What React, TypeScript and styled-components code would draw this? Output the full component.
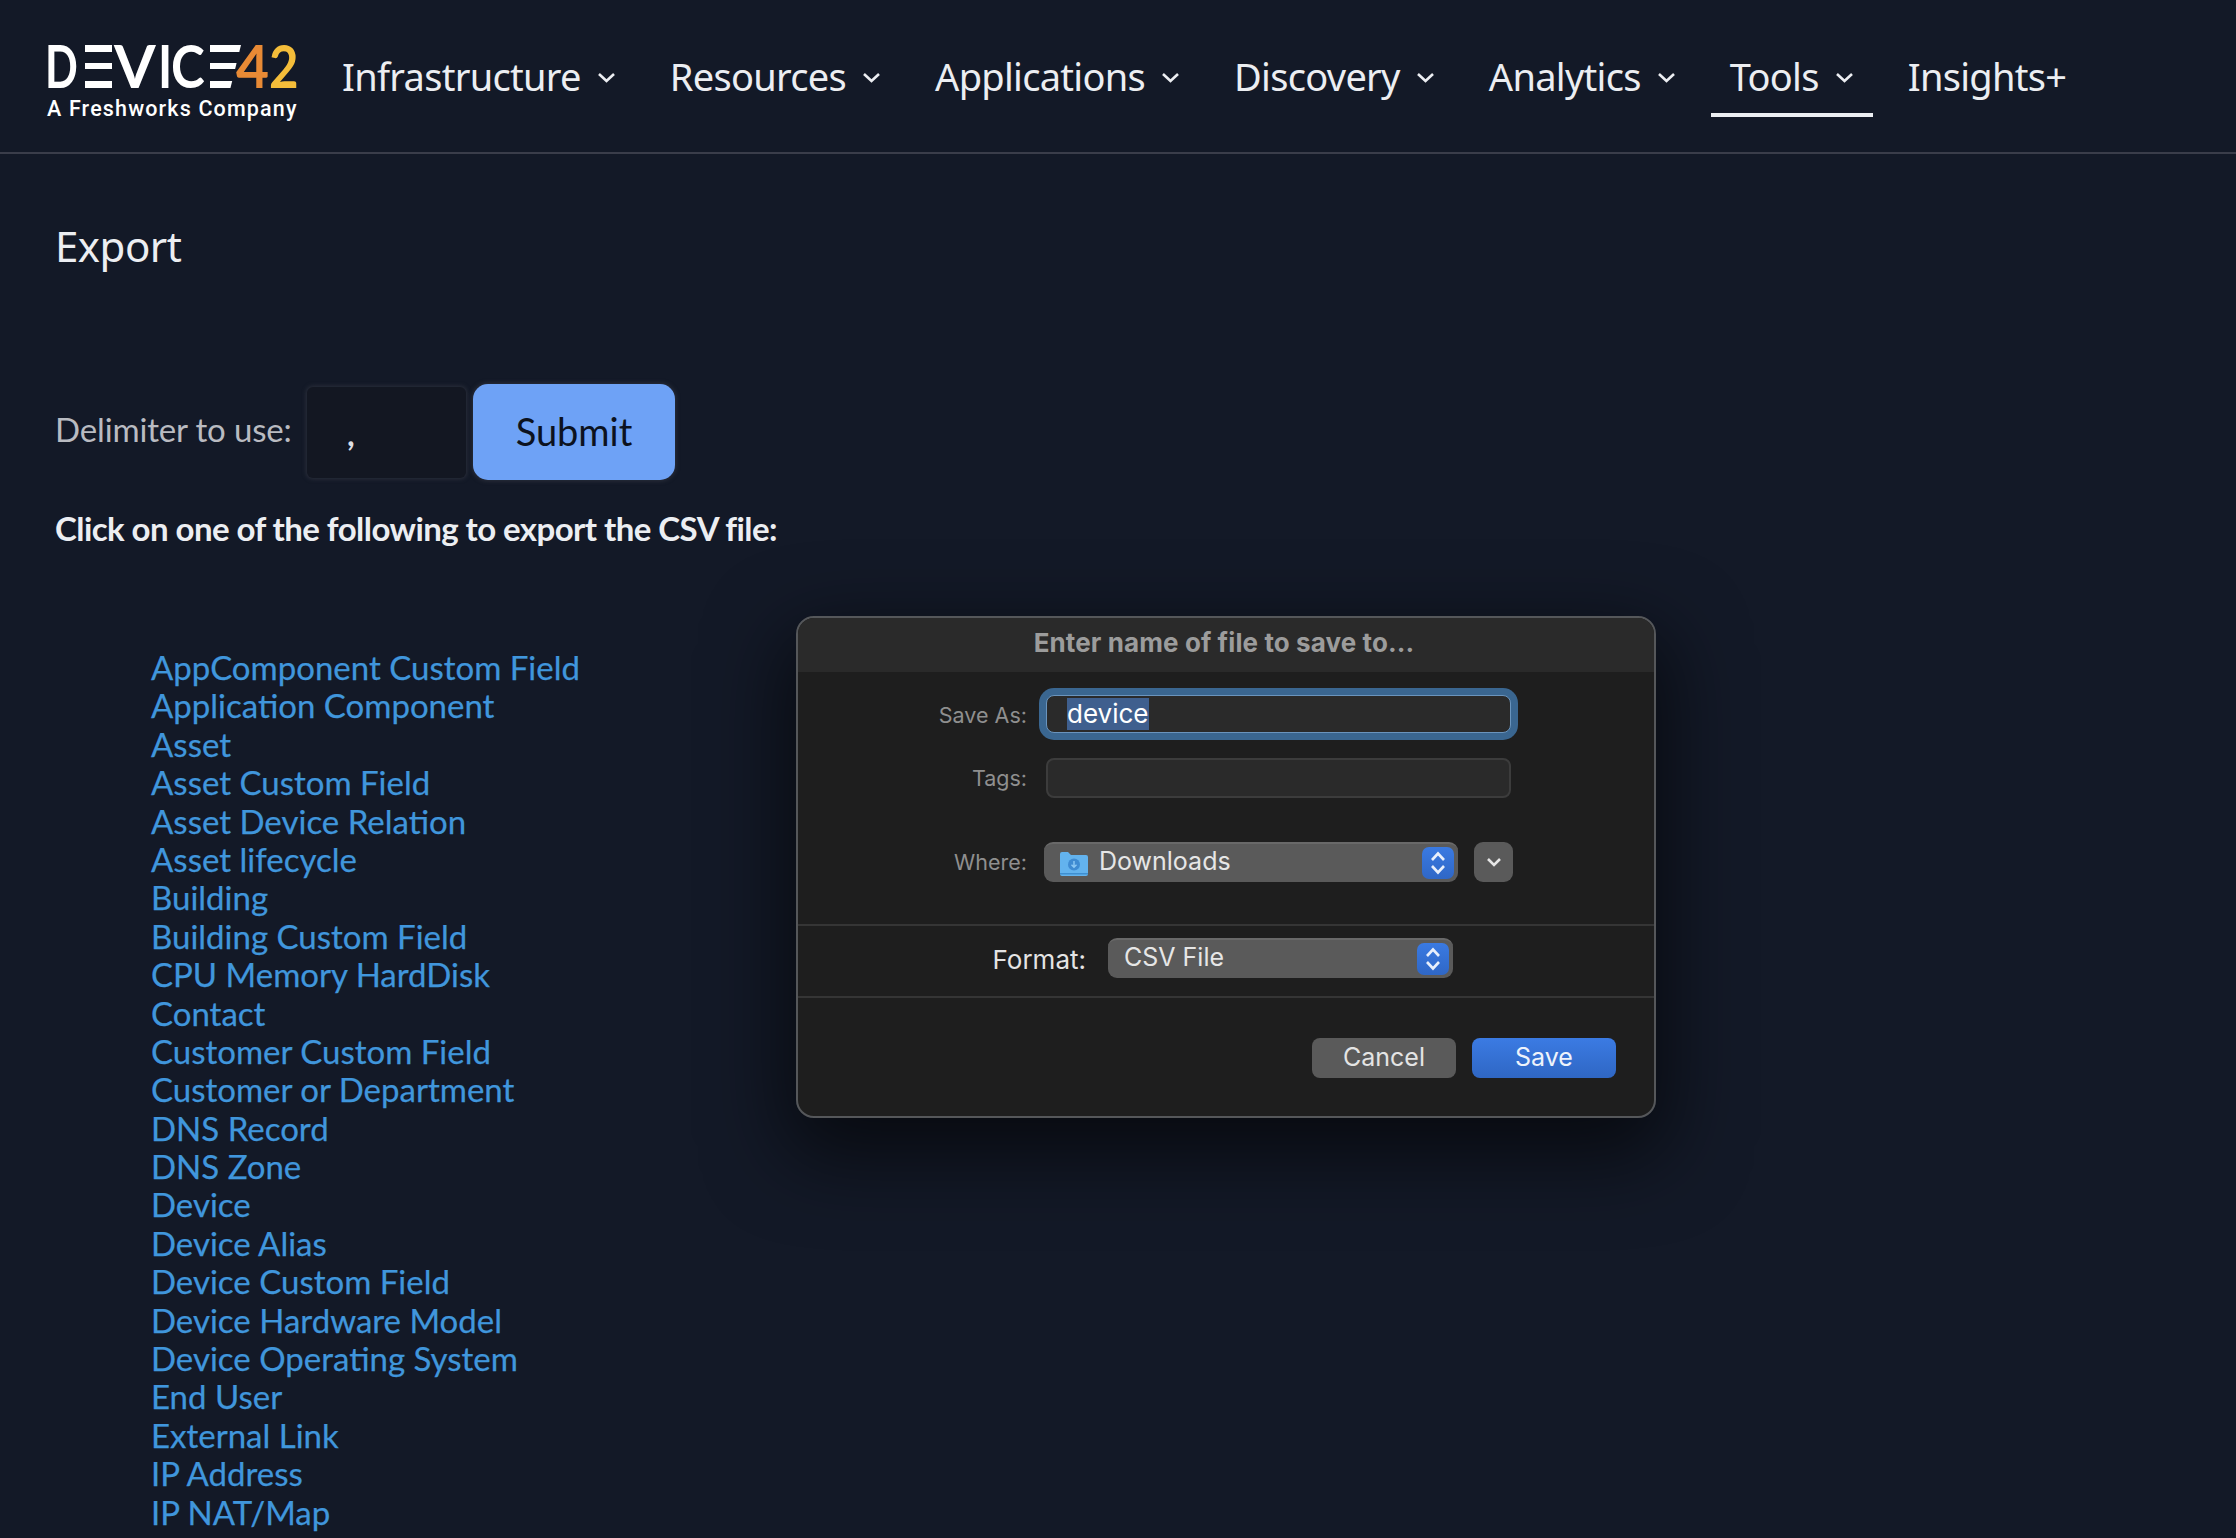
import React from 'react';
import styled, { createGlobalStyle } from 'styled-components';

const GlobalStyle = createGlobalStyle`
  html, body {
    margin: 0;
    padding: 0;
    background: #131927;
    overflow: hidden;
  }
  * { box-sizing: border-box; }
`;

const Page = styled.div`
  position: relative;
  width: 2236px;
  height: 1538px;
  overflow: hidden;
  background: #131927;
  color: #eceef2;
  font-family: 'Lato', 'Liberation Sans', sans-serif;
`;

const Header = styled.header`
  display: flex;
  align-items: flex-start;
  height: 154px;
  padding: 0 0 0 47px;
  border-bottom: 2px solid #3a3d4a;
`;

const Logo = styled.div`
  display: flex;
  flex-direction: column;
  width: 250px;
  padding-top: 45px;
  margin-right: 26px;
  flex-shrink: 0;
`;

const LogoWord = styled.div`
  display: flex;
  height: 43px;
  font-family: 'Lato', sans-serif;
  font-weight: 700;
  font-size: 60px;
  line-height: 40px;
  color: #fff;
`;

const LogoPart = styled.span<{ $w: number; $sx: number; $gap?: number }>`
  display: block;
  flex: 0 0 ${p => p.$w}px;
  width: ${p => p.$w}px;
  margin-left: ${p => p.$gap ?? 0}px;
  transform: scaleX(${p => p.$sx});
  transform-origin: left center;
  white-space: nowrap;
`;

const LogoFour = styled(LogoPart)`
  color: #e88a35;
`;

const LogoTwo = styled(LogoPart)`
  color: #f4bd3a;
`;

const LogoBars = styled.span<{ $w: number; $gap: number; $slant?: boolean }>`
  display: block;
  flex: 0 0 ${p => p.$w}px;
  height: 43px;
  margin-left: ${p => p.$gap}px;
  font-size: 20px;
  color: transparent;
  background:
    linear-gradient(#fff, #fff) 0 0 / 100% 7px no-repeat,
    linear-gradient(#fff, #fff) 0 18px / 100% 6px no-repeat,
    linear-gradient(#fff, #fff) 0 36px / 100% 7px no-repeat;
  ${p => p.$slant && 'clip-path: polygon(0 0, 100% 0, 66% 100%, 0 100%);'}
`;

const LogoTag = styled.div`
  margin-top: 8px;
  font-family: 'Roboto', sans-serif;
  font-size: 21.5px;
  font-weight: 500;
  letter-spacing: 1.15px;
  line-height: 26px;
  color: #fff;
  white-space: nowrap;
`;

const Nav = styled.nav`
  display: flex;
  gap: 16px;
  margin-top: 36px;
`;

const NavItem = styled.a<{ $active?: boolean }>`
  display: flex;
  align-items: flex-start;
  gap: 16px;
  height: 81px;
  padding: 0 19px;
  font-family: 'Noto Sans', sans-serif;
  font-size: 38px;
  line-height: 80px;
  letter-spacing: -0.7px;
  color: #eceef2;
  white-space: nowrap;
  border-bottom: 4px solid ${p => (p.$active ? '#eceef2' : 'transparent')};
`;

const Caret = styled.svg`
  width: 19px;
  height: 11px;
  margin-top: 36px;
  fill: none;
  stroke: #eceef2;
  stroke-width: 2.6;
`;

const Main = styled.main`
  padding: 0 0 0 55px;
`;

const Title = styled.h1`
  margin: 0;
  padding-top: 64px;
  height: 230px;
  font-family: 'Noto Sans', sans-serif;
  font-size: 42px;
  font-weight: 400;
  line-height: 56px;
  letter-spacing: -0.5px;
  color: #eceef2;
`;

const DelimiterRow = styled.form`
  display: flex;
  align-items: center;
  height: 96px;
`;

const DelimiterLabel = styled.label`
  width: 252px;
  margin-top: -7px;
  font-size: 33px;
  letter-spacing: -0.15px;
  color: #b9bbc1;
  white-space: nowrap;
`;

const DelimiterInput = styled.div`
  width: 159px;
  height: 91px;
  padding: 26px 0 0 40px;
  margin-right: 7px;
  border-radius: 6px;
  background: #131722;
  box-shadow: 0 0 4px 1px #2c303c;
  font-size: 33px;
  font-weight: 700;
  color: #dddfe4;
`;

const SubmitButton = styled.button`
  width: 202px;
  height: 96px;
  padding: 0 0 3px;
  border: none;
  border-radius: 15px;
  background: #6ea2f6;
  box-shadow: 0 0 4px 1px #2c303c;
  font-family: 'Lato', sans-serif;
  font-size: 38px;
  color: #0c1220;
`;

const Lead = styled.p`
  margin: 23px 0 0;
  font-size: 33px;
  font-weight: 700;
  letter-spacing: -0.56px;
  line-height: 50px;
  color: #eceef2;
  white-space: nowrap;
`;

const LinkList = styled.ul`
  display: flex;
  flex-direction: column;
  margin: 0;
  padding: 95px 0 0 96px;
  list-style: none;
`;

const LinkRow = styled.li`
  height: 38.4px;
  font-size: 33px;
  line-height: 38.4px;
  color: #4096dc;
  -webkit-text-stroke: 0.25px #4096dc;
  white-space: nowrap;
`;

const DialogShadow = styled.div`
  position: absolute;
  left: 796px;
  top: 616px;
  width: 860px;
  height: 502px;
  border-radius: 18px;
  box-shadow: 0 28px 80px 10px rgba(0, 0, 0, 0.6);
`;

const Dialog = styled.section`
  position: absolute;
  left: 796px;
  top: 616px;
  width: 860px;
  height: 502px;
  display: flex;
  flex-direction: column;
  background: #1e1e1e;
  border: 2px solid #55575a;
  border-radius: 18px;
  overflow: hidden;
  font-family: 'Inter', 'Liberation Sans', sans-serif;
`;

const DialogTitle = styled.h2`
  flex: 0 0 54px;
  margin: 0;
  padding-right: 4px;
  background: #2a2a2a;
  font-size: 26px;
  font-weight: 700;
  letter-spacing: 0.1px;
  line-height: 50px;
  text-align: center;
  color: #9c9c9c;
`;

const FormGrid = styled.div`
  display: grid;
  grid-template-columns: 229px 465px;
  column-gap: 19px;
  align-content: start;
  padding-top: 23px;
  height: 252px;
`;

const FieldLabel = styled.label<{ $rowGap: number }>`
  height: 40px;
  margin-bottom: ${p => p.$rowGap}px;
  font-size: 21.5px;
  line-height: 41px;
  text-align: right;
  color: #8f8f8f;
`;

const TextField = styled.div<{ $focus?: boolean; $rowGap: number }>`
  width: 465px;
  height: ${p => (p.$focus ? 38 : 40)}px;
  margin-bottom: ${p => p.$rowGap}px;
  padding-left: 20px;
  border-radius: 8px;
  background: #2a2a2a;
  border: ${p => (p.$focus ? '1px solid #6a94bd' : '2px solid #3c3c3c')};
  box-shadow: ${p => (p.$focus ? '0 0 0 7px #3a6690' : 'none')};
  font-size: 26px;
  line-height: 35px;
  color: #fff;
`;

const Selected = styled.span`
  display: inline-block;
  height: 32px;
  line-height: 31px;
  background: #3f5f8e;
`;

const WhereGroup = styled.div`
  display: flex;
  gap: 16px;
  width: 469px;
  margin-left: -2px;
`;

const Popup = styled.div<{ $w: number }>`
  display: flex;
  align-items: center;
  gap: 11px;
  width: ${p => p.$w}px;
  height: 40px;
  padding: 0 4px 0 16px;
  border-radius: 9px;
  background: #5a5a5a;
  border-top: 2px solid #696969;
  font-size: 25px;
  color: #e6e6e6;
`;

const PopupText = styled.span`
  flex: 1;
  margin-top: -5px;
`;

const Stepper = styled.span`
  display: flex;
  align-items: center;
  justify-content: center;
  width: 32px;
  height: 32px;
  border-radius: 7px;
  background: linear-gradient(#3a7ae2, #2f67c6);
`;

const SquareButton = styled.div`
  display: flex;
  align-items: center;
  justify-content: center;
  width: 39px;
  height: 40px;
  border-radius: 9px;
  background: #5a5a5a;
`;

const Separator = styled.hr`
  flex: 0 0 2px;
  width: 100%;
  margin: 0;
  border: none;
  background: #353535;
`;

const FormatRow = styled.div`
  display: flex;
  align-items: flex-start;
  gap: 22px;
  height: 70px;
  padding: 12px 0 0 138px;
`;

const FormatLabel = styled.label`
  width: 150px;
  font-size: 26px;
  line-height: 44px;
  text-align: right;
  color: #e4e4e4;
`;

const Footer = styled.div`
  display: flex;
  justify-content: flex-end;
  gap: 16px;
  padding: 40px 38px 0 0;
`;

const DialogButton = styled.button<{ $primary?: boolean }>`
  width: 144px;
  height: 40px;
  padding: 0 0 2px;
  border: none;
  border-radius: 8px;
  background: ${p => (p.$primary ? 'linear-gradient(#3b7be3, #2f67c4)' : '#5a5a5a')};
  font-family: 'Inter', 'Liberation Sans', sans-serif;
  font-size: 25px;
  color: ${p => (p.$primary ? '#eef3fb' : '#e4e4e4')};
`;

const navItems = ['Infrastructure', 'Resources', 'Applications', 'Discovery', 'Analytics', 'Tools'];

const links = [
  'AppComponent Custom Field',
  'Application Component',
  'Asset',
  'Asset Custom Field',
  'Asset Device Relation',
  'Asset lifecycle',
  'Building',
  'Building Custom Field',
  'CPU Memory HardDisk',
  'Contact',
  'Customer Custom Field',
  'Customer or Department',
  'DNS Record',
  'DNS Zone',
  'Device',
  'Device Alias',
  'Device Custom Field',
  'Device Hardware Model',
  'Device Operating System',
  'End User',
  'External Link',
  'IP Address',
  'IP NAT/Map',
];

const UpDown = () => (
  <svg width="18" height="26" viewBox="0 0 18 26" fill="none" stroke="#e8effb" strokeWidth="2.6">
    <path d="M3 10 9 3.5 15 10" />
    <path d="M3 16 9 22.5 15 16" />
  </svg>
);

const FolderIcon = () => (
  <svg width="28" height="28" viewBox="0 0 28 28">
    <path d="M0 5a2 2 0 0 1 2-2h6l3 3h15a2 2 0 0 1 2 2v17a2 2 0 0 1-2 2H2a2 2 0 0 1-2-2z" fill="#63b3ee" />
    <rect y="24" width="28" height="1.5" fill="#3f8fd0" />
    <circle cx="14" cy="15.5" r="6" fill="#3f8bd2" />
    <path d="M14 12v6M11.5 15.8 14 18.3l2.5-2.5" fill="none" stroke="#8cc8f4" strokeWidth="1.4" />
  </svg>
);

export default function App() {
  return (
    <Page>
      <GlobalStyle />
      <Header>
        <Logo>
          <LogoWord>
            <LogoPart $w={32} $sx={0.72} $gap={-2}>D</LogoPart>
            <LogoBars $w={27} $gap={8}>E</LogoBars>
            <LogoPart $w={42} $sx={1} $gap={2}>V</LogoPart>
            <LogoPart $w={8} $sx={0.8} $gap={2}>I</LogoPart>
            <LogoPart $w={32} $sx={0.85} $gap={5}>C</LogoPart>
            <LogoBars $w={31} $gap={7} $slant>E</LogoBars>
            <LogoFour $w={31} $sx={0.95} $gap={-5}>4</LogoFour>
            <LogoTwo $w={27} $sx={0.85} $gap={2}>2</LogoTwo>
          </LogoWord>
          <LogoTag>A Freshworks Company</LogoTag>
        </Logo>
        <Nav>
          {navItems.map(item => (
            <NavItem key={item} $active={item === 'Tools'}>
              {item}
              <Caret viewBox="0 0 19 11">
                <path d="M2 2 9.5 9 17 2" />
              </Caret>
            </NavItem>
          ))}
          <NavItem>Insights+</NavItem>
        </Nav>
      </Header>

      <Main>
        <Title>Export</Title>
        <DelimiterRow>
          <DelimiterLabel>Delimiter to use:</DelimiterLabel>
          <DelimiterInput>,</DelimiterInput>
          <SubmitButton type="button">Submit</SubmitButton>
        </DelimiterRow>
        <Lead>Click on one of the following to export the CSV file:</Lead>
        <LinkList>
          {links.map(link => (
            <LinkRow key={link}>{link}</LinkRow>
          ))}
        </LinkList>
      </Main>

      <DialogShadow />
      <Dialog>
        <DialogTitle>Enter name of file to save to...</DialogTitle>
        <FormGrid>
          <FieldLabel $rowGap={23}>Save As:</FieldLabel>
          <TextField $focus $rowGap={25}>
            <Selected>device</Selected>
          </TextField>
          <FieldLabel $rowGap={44}>Tags:</FieldLabel>
          <TextField $rowGap={44} />
          <FieldLabel $rowGap={0}>Where:</FieldLabel>
          <WhereGroup>
            <Popup $w={414}>
              <FolderIcon />
              <PopupText>Downloads</PopupText>
              <Stepper>
                <UpDown />
              </Stepper>
            </Popup>
            <SquareButton>
              <svg width="16" height="10" viewBox="0 0 16 10" fill="none" stroke="#e6e6e6" strokeWidth="2.6">
                <path d="M2 2 8 8 14 2" />
              </svg>
            </SquareButton>
          </WhereGroup>
        </FormGrid>
        <Separator />
        <FormatRow>
          <FormatLabel>Format:</FormatLabel>
          <Popup $w={345}>
            <PopupText>CSV File</PopupText>
            <Stepper>
              <UpDown />
            </Stepper>
          </Popup>
        </FormatRow>
        <Separator />
        <Footer>
          <DialogButton type="button">Cancel</DialogButton>
          <DialogButton type="button" $primary>Save</DialogButton>
        </Footer>
      </Dialog>
    </Page>
  );
}
